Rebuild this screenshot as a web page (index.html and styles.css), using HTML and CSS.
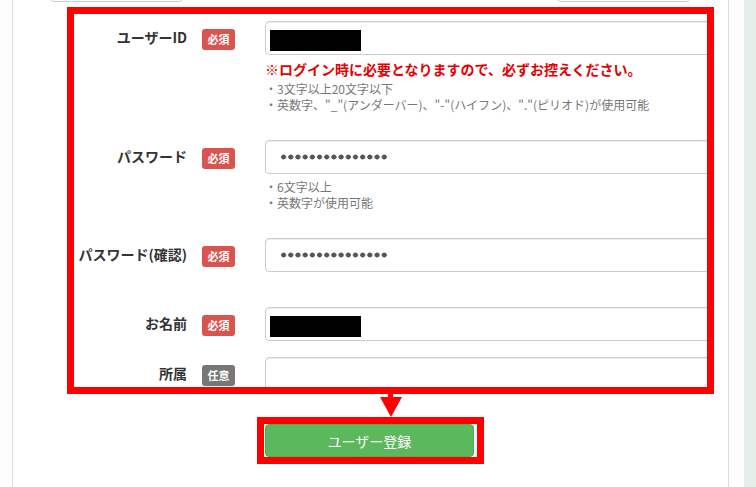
FILE: index.html
```html
<!DOCTYPE html>
<html lang="ja">
<head>
    <meta charset="UTF-8">
    <meta name="viewport" content="width=device-width, initial-scale=1.0">
    <title>ユーザー登録</title>
    <link rel="stylesheet" href="styles.css">
</head>
<body>
    <div class="layout">
        <div class="page">
            <div class="prev">
                <div class="prev-input"></div>
                <div class="prev-text">登録後に担当者の承認をお待ちください</div>
                <div class="prev-input prev-input-right"></div>
            </div>

            <div class="highlight">
                <div class="form-row form-row-help">
                    <div class="form-label">ユーザーID</div>
                    <span class="badge">必須</span>
                    <div class="form-field">
                        <div class="input"><span class="redact"></span></div>
                        <p class="note">※ログイン時に必要となりますので、必ずお控えください。</p>
                        <ul class="hints">
                            <li>・3文字以上20文字以下</li>
                            <li>・英数字、"_"(アンダーバー)、"-"(ハイフン)、"."(ピリオド)が使用可能</li>
                        </ul>
                    </div>
                </div>

                <div class="form-row form-row-help">
                    <div class="form-label">パスワード</div>
                    <span class="badge">必須</span>
                    <div class="form-field">
                        <div class="input"><span class="dots"></span></div>
                        <ul class="hints hints-loose">
                            <li>・6文字以上</li>
                            <li>・英数字が使用可能</li>
                        </ul>
                    </div>
                </div>

                <div class="form-row form-row-wide">
                    <div class="form-label">パスワード(確認)</div>
                    <span class="badge">必須</span>
                    <div class="form-field">
                        <div class="input"><span class="dots"></span></div>
                    </div>
                </div>

                <div class="form-row">
                    <div class="form-label">お名前</div>
                    <span class="badge">必須</span>
                    <div class="form-field">
                        <div class="input"><span class="redact"></span></div>
                    </div>
                </div>

                <div class="form-row">
                    <div class="form-label">所属</div>
                    <span class="badge badge-optional">任意</span>
                    <div class="form-field">
                        <div class="input"></div>
                    </div>
                </div>
            </div>

            <div class="arrow">
                <svg width="22" height="23" viewBox="0 0 22 23">
                    <rect x="8" y="0" width="5" height="4" fill="#f00"/>
                    <polygon points="0,3 22,3 11,23" fill="#f00"/>
                </svg>
            </div>

            <div class="submit-box">
                <button class="btn-submit" type="button">ユーザー登録</button>
            </div>
        </div>
        <div class="sidebar"></div>
    </div>
</body>
</html>
```

FILE: styles.css
```css
body {
    margin: 0;
    height: 100vh;
    overflow: hidden;
    background-color: #fdfdfd;
    font-family: "Noto Sans CJK JP", "Noto Sans", sans-serif;
    color: #333;
}
.layout {
    display: flex;
    height: 100%;
}
.page {
    flex: none;
    width: 715px;
    margin-left: 12px;
    border-left: 1px solid #ddd;
    border-right: 1px solid #ddd;
    background: #fff;
}
.sidebar {
    flex: 1;
    margin-left: 15px;
    background: #e5ede9;
}

/* bottom edge of the previous rows, cut off by the window */
.prev {
    display: flex;
    height: 7px;
    overflow: hidden;
}
.prev-input {
    flex: none;
    width: 133px;
    height: 30px;
    margin-top: -28px;
    margin-left: 37px;
    box-sizing: border-box;
    border: 1px solid #ccc;
    border-radius: 4px;
}
.prev-input-right {
    margin-left: 87px;
}
.prev-text {
    flex: none;
    width: 205px;
    margin-left: 82px;
    margin-top: -14px;
    font-size: 12px;
    line-height: 16px;
    color: #999;
    white-space: nowrap;
    overflow: hidden;
}

.highlight {
    width: 647px;
    height: 387px;
    margin-left: 54px;
    box-sizing: border-box;
    border: 7px solid #f00;
    padding-top: 7px;
    overflow: hidden;
}
.form-row {
    display: flex;
    align-items: flex-start;
    margin-bottom: 16px;
}
.form-row-help {
    margin-bottom: 27px;
}
.form-row-wide {
    margin-bottom: 35px;
}
.form-label {
    flex: none;
    width: 113px;
    padding-top: 6px;
    text-align: right;
    font-size: 14px;
    line-height: 20px;
    font-weight: bold;
    color: #333;
    white-space: nowrap;
}
.badge {
    flex: none;
    width: 33px;
    height: 21px;
    margin-left: 15px;
    margin-top: 8px;
    border-radius: 3px;
    background: #d9534f;
    color: #fff;
    font-size: 11px;
    line-height: 21px;
    font-weight: bold;
    text-align: center;
}
.badge-optional {
    background: #777;
}
.form-field {
    flex: none;
    width: 500px;
    margin-left: 30px;
}
.input {
    height: 34px;
    box-sizing: border-box;
    border: 1px solid #ccc;
    border-radius: 4px;
    padding: 8px 0 0 4px;
    background: #fff;
    box-shadow: inset 0 1px 1px rgba(0,0,0,0.075);
}
.redact {
    display: block;
    width: 91px;
    height: 21px;
    background: #000;
}
.dots {
    display: block;
    width: 108px;
    height: 6px;
    margin: 5px 0 0 10px;
    background: radial-gradient(circle, #555 2.2px, transparent 2.8px) 0 0 / 7.2px 6px repeat-x;
}
.note {
    margin: 4px 0 0;
    font-size: 14px;
    line-height: 20px;
    font-weight: bold;
    color: #e60000;
    white-space: nowrap;
}
.hints {
    list-style: none;
    margin: 2px 0 0;
    padding: 0;
    font-size: 12px;
    line-height: 16px;
    color: #777;
    white-space: nowrap;
}
.hints-loose {
    margin-top: 5px;
}

.arrow {
    height: 23px;
    margin-left: 367px;
}
.arrow svg {
    display: block;
}
.submit-box {
    width: 227px;
    height: 47px;
    margin-left: 244px;
    box-sizing: border-box;
    border: 7px solid #f00;
    padding-left: 1px;
}
.btn-submit {
    display: block;
    width: 209px;
    height: 33px;
    border: 1px solid #4cae4c;
    border-radius: 4px;
    background: #5cb85c;
    color: #fff;
    font-family: inherit;
    font-size: 14px;
    cursor: pointer;
}
```
